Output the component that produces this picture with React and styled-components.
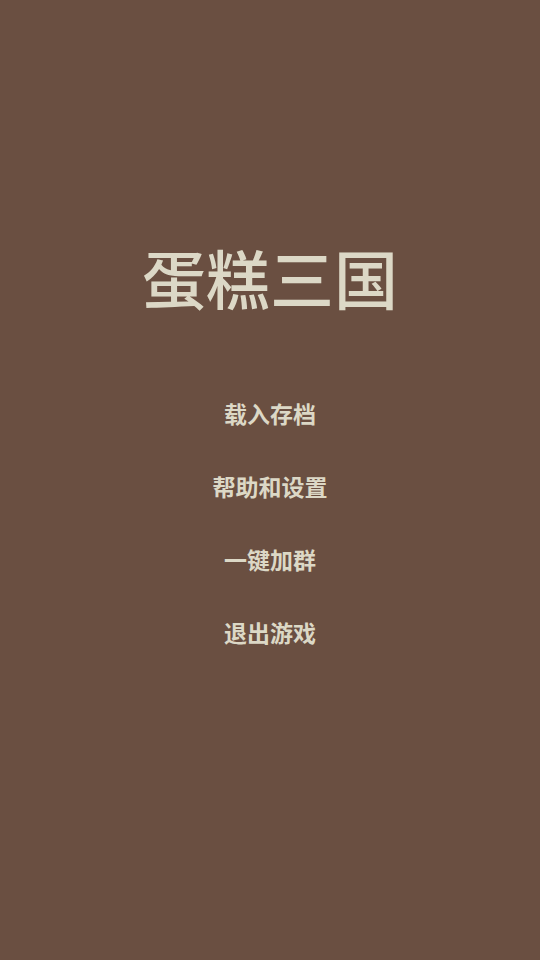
import styled, { createGlobalStyle } from 'styled-components';

const GlobalStyle = createGlobalStyle`
    html, body {
        margin: 0;
        padding: 0;
        background: #6a4f41;
    }
    body {
        font-family: "Noto Sans CJK SC", "Noto Sans", sans-serif;
    }
`

const Screen = styled.div`
    min-height: 100vh;
    display: flex;
    flex-direction: column;
    align-items: center;
    padding-top: 244px;
    box-sizing: border-box;
    background: #6a4f41;
    color: #dcd8c6;
`

const Title = styled.h1`
    margin: 0;
    font-size: 64px;
    line-height: 64px;
    font-weight: 500;
    letter-spacing: 0;
`

const Menu = styled.nav`
    display: flex;
    flex-direction: column;
    align-items: center;
    margin-top: 69px;
`

const MenuItem = styled.button`
    border: none;
    background: none;
    padding: 0;
    height: 73px;
    line-height: 73px;
    font-family: inherit;
    font-size: 23px;
    font-weight: 700;
    color: #dcd8c6;
    cursor: pointer;
`

const items = ['载入存档', '帮助和设置', '一键加群', '退出游戏'];

export default function App() {
    return (
        <>
            <GlobalStyle />
            <Screen>
                <Title>蛋糕三国</Title>
                <Menu>
                    {items.map(label => (
                        <MenuItem key={label}>{label}</MenuItem>
                    ))}
                </Menu>
            </Screen>
        </>
    )
}
